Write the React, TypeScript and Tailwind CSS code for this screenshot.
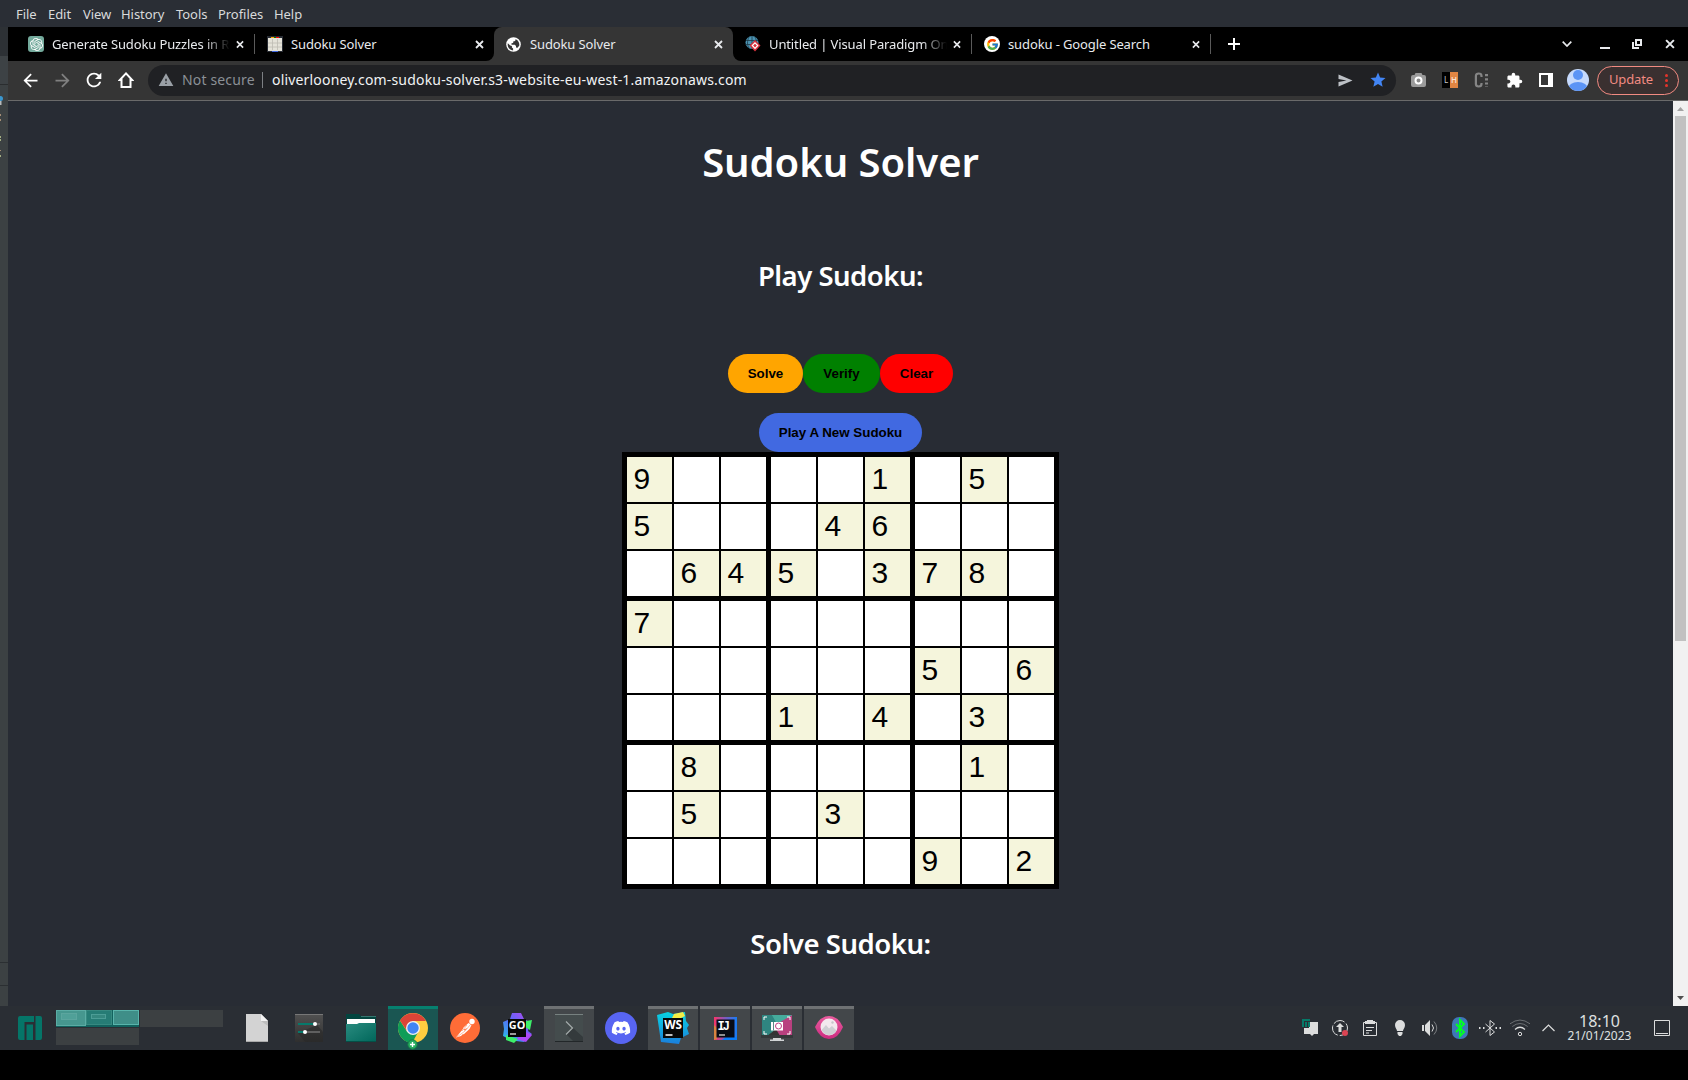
import React from "react";
import {
  MdArrowBack,
  MdArrowForward,
  MdRefresh,
  MdWarning,
  MdStar,
  MdExtension,
} from "react-icons/md";
import { SiOpenai } from "react-icons/si";
import { FcGoogle } from "react-icons/fc";
import { FaDiscord } from "react-icons/fa";

const PUZZLE = [
  "9....1.5.",
  "5...46...",
  ".645.378.",
  "7........",
  "......5.6",
  "...1.4.3.",
  ".8.....1.",
  ".5..3....",
  "......9.2",
];

const MENU = [
  { label: "File", width: "w-[32px]" },
  { label: "Edit", width: "w-[35px]" },
  { label: "View", width: "w-[38px]" },
  { label: "History", width: "w-[55px]" },
  { label: "Tools", width: "w-[42px]" },
  { label: "Profiles", width: "w-[56px]" },
  { label: "Help", width: "w-[40px]" },
];

function MenuBar() {
  return (
    <div className="flex h-[27px] shrink-0 items-center bg-[#2a2e35] pl-4 text-[13px] tracking-[-0.05px] text-[#d9dadb]">
      {MENU.map((m) => (
        <span key={m.label} className={`${m.width} pt-0.5`}>
          {m.label}
        </span>
      ))}
    </div>
  );
}

function Cross({ size = 9, color = "#e8eaed" }: { size?: number; color?: string }) {
  return (
    <svg width={size} height={size} viewBox="0 0 9 9">
      <path d="M1 1l7 7M8 1l-7 7" stroke={color} strokeWidth="1.8" />
    </svg>
  );
}

function SudokuFavicon() {
  return (
    <svg width="16" height="16" viewBox="0 0 16 16">
      <rect width="16" height="16" fill="#282c34" />
      <rect x="4" y="1" width="3" height="1" fill="#ffa500" />
      <rect x="7" y="1" width="2" height="1" fill="#008000" />
      <rect x="9" y="1" width="3" height="1" fill="#ff0000" />
      <rect x="1" y="2" width="14" height="13" fill="#e4e2d8" />
      <path d="M5.500 3v11M10.500 3v11M1 7h14M1 11h14" stroke="#bdbbb2" strokeWidth=".8" />
      <rect x="5" y="15" width="6" height="1" fill="#4169e1" />
    </svg>
  );
}

function GlobeFavicon() {
  return (
    <svg width="15" height="15" viewBox="0 0 15 15">
      <circle cx="7.500" cy="7.500" r="7.300" fill="#fff" />
      <path
        d="M1.800 6.200l2.400 2.300 1.700.4v1.600l1.200 1.100v1.900c-3.500-.3-6-3.500-5.300-7.300zM9.500 2.200c3 1 4.300 4 3.700 6.600l-1.700 2-1.500-.4V9L8.800 7.700H5.500V6.300l1.700-.4V4.500l2-.6z"
        fill="#353535"
      />
    </svg>
  );
}

function ParadigmFavicon() {
  return (
    <svg width="16" height="16" viewBox="0 0 16 16">
      <circle cx="7" cy="6.500" r="6.500" fill="#4c93b2" />
      <path d="M1 4.500h12M.500 8.500h12M7 0v13M4 1c-2 4-2 8 0 11M10 1c2 4 2 8 0 11" stroke="#1b3a49" strokeWidth=".8" fill="none" />
      <path d="M10 4l5.500 5.500L10 15.500 4.500 9.500z" fill="#d9303c" />
      <path d="M10 6.800l2.700 2.700-2.700 2.900-2.700-2.900z" fill="none" stroke="#fff" strokeWidth="1.200" />
    </svg>
  );
}

type TabInfo = {
  title: string;
  icon: React.ReactNode;
  active?: boolean;
  separator?: boolean;
  fade?: boolean;
  corner?: string;
};

const TABS: TabInfo[] = [
  {
    title: "Generate Sudoku Puzzles in R",
    icon: (
      <span className="flex size-4 items-center justify-center rounded-[3px] bg-[#74aa9c]">
        <SiOpenai size={13} color="#ffffff" />
      </span>
    ),
    separator: true,
    fade: true,
  },
  { title: "Sudoku Solver", icon: <SudokuFavicon />, corner: "rounded-br-[8px]" },
  {
    title: "Sudoku Solver",
    icon: <GlobeFavicon />,
    active: true,
  },
  {
    title: "Untitled | Visual Paradigm On",
    icon: <ParadigmFavicon />,
    separator: true,
    fade: true,
    corner: "rounded-bl-[8px]",
  },
  {
    title: "sudoku - Google Search",
    icon: (
      <span className="flex size-4 items-center justify-center rounded-full bg-white">
        <FcGoogle size={13} />
      </span>
    ),
    separator: true,
  },
];

function Tab({ tab }: { tab: TabInfo }) {
  return (
    <div className={tab.active ? "w-[239px] bg-black" : "w-[239px] bg-[#353535]"}>
      <div
        className={`flex h-[34px] items-center pl-[12px] ${
          tab.active ? "rounded-t-[8px] bg-[#353535]" : "bg-black"
        } ${tab.corner ?? ""}`}
      >
        <span className="flex w-[24px] shrink-0 items-center">{tab.icon}</span>
        <span
          className={`w-[184px] shrink-0 text-[13px] leading-5 tracking-[-0.12px] whitespace-nowrap text-[#e8eaed] ${
            tab.fade
              ? "[mask-image:linear-gradient(to_right,black_152px,transparent_178px)]"
              : ""
          }`}
        >
          {tab.title}
        </span>
        <Cross />
        {tab.separator && <span className="ml-[10px] h-5 w-px shrink-0 bg-[#5a5a5a]" />}
      </div>
    </div>
  );
}

function TabStrip() {
  return (
    <div className="flex h-[34px] shrink-0 items-center bg-black">
      <div className="w-2 self-stretch" />
      {TABS.map((t, i) => (
        <Tab key={i} tab={t} />
      ))}
      <svg className="ml-[17px]" width="12" height="12" viewBox="0 0 12 12">
        <path d="M6 0v12M0 6h12" stroke="#fff" strokeWidth="2" />
      </svg>
      <div className="mr-[13px] ml-auto flex items-center">
        <svg width="10" height="6" viewBox="0 0 10 6" className="mr-7">
          <path d="M.7.700l4.300 4.300 4.300-4.300" fill="none" stroke="#e8eaed" strokeWidth="1.700" />
        </svg>
        <span className="mt-2 mr-[22px] h-0.5 w-2.5 bg-[#e8eaed]" />
        <svg width="10" height="10" viewBox="0 0 10 10" className="mr-[23px]">
          <path d="M4 1h5v5H4zM1 3v6h6" fill="none" stroke="#e8eaed" strokeWidth="2" />
        </svg>
        <Cross size={10} />
      </div>
    </div>
  );
}

function Toolbar() {
  return (
    <div className="flex h-10 shrink-0 items-center border-b border-[#6a6a6a] bg-[#353535] pb-px pl-[6px]">
      <span className="flex w-8 justify-center"><MdArrowBack size={21} color="#fff" /></span>
      <span className="flex w-8 justify-center"><MdArrowForward size={21} color="#808080" /></span>
      <span className="flex w-8 justify-center"><MdRefresh size={22} color="#fff" /></span>
      <span className="flex w-8 justify-center">
        <svg width="16" height="16" viewBox="0 0 16 16">
          <path d="M8 1.400L1.800 8H3.500v7h9V8h1.700z" fill="none" stroke="#fff" strokeWidth="2" />
        </svg>
      </span>
      <div className="ml-[6px] flex h-[31px] w-[1248px] items-center rounded-full bg-[#202124] pl-[10px] text-[14px]">
        <MdWarning size={16} color="#9aa0a6" />
        <span className="ml-2 w-[80px] pb-0.5 text-[14px] tracking-[0.15px] text-[#8b9096]">Not secure</span>
        <span className="h-4 w-px bg-[#7d8084]" />
        <span className="ml-[9px] pb-0.5 text-[14px] tracking-[0.18px] text-[#f1f3f4]">
          oliverlooney.com-sudoku-solver.s3-website-eu-west-1.amazonaws.com
        </span>
        <svg className="ml-auto" width="15" height="13" viewBox="0 0 15 13">
          <path d="M.500.500l14 6-14 6V8l8-1.500-8-1.500z" fill="#bdc1c6" />
        </svg>
        <span className="mr-[9px] ml-[16px]"><MdStar size={18} color="#4285f4" /></span>
      </div>
      <div className="flex items-center pl-[15px]">
        <span className="w-[31px]">
          <svg width="15" height="14" viewBox="0 0 15 14">
            <path d="M4.500 0h6l1 2H13a2 2 0 0 1 2 2v8a2 2 0 0 1-2 2H2a2 2 0 0 1-2-2V4a2 2 0 0 1 2-2h1.500z" fill="#9b9b9b" />
            <circle cx="7.500" cy="7.500" r="3" fill="#8a8a8a" stroke="#fff" strokeWidth="2" />
          </svg>
        </span>
        <div className="flex h-4 w-4 text-[8px] leading-4">
          <span className="w-2 bg-black text-center text-[#c8c8c8]">L</span>
          <span className="w-2 bg-[#e08543] text-center font-semibold text-[#f6e2d2]">H</span>
        </div>
        <svg className="ml-[16px]" width="16" height="16" viewBox="0 0 16 16">
          <path d="M7.500 5V4Q7.500 1.500 4.700 1.500T1.900 4v8q0 2.500 2.800 2.500T7.500 12v-1" fill="none" stroke="#858585" strokeWidth="2.200" />
          <path d="M12.500 2v13" fill="none" stroke="#858585" strokeWidth="3" strokeDasharray="2.200 2" />
        </svg>
        <span className="ml-[16px]"><MdExtension size={17} color="#fff" /></span>
        <svg className="ml-[16px]" width="14" height="14" viewBox="0 0 14 14">
          <path d="M0 0h14v14H0zM2 2v10h7V2z" fill="#fff" fillRule="evenodd" />
        </svg>
        <div className="ml-[14px] flex size-[22px] flex-col items-center overflow-hidden rounded-full bg-[#c6dafc]">
          <span className="mt-px size-[10px] shrink-0 rounded-full bg-[#5b94f5]" />
          <span className="mt-[2px] h-[14px] w-[20px] shrink-0 rounded-[50%] bg-[#5b94f5]" />
        </div>
        <div className="ml-2 flex h-[29px] w-[82px] items-center rounded-full border border-[#f28b82] bg-[#3a3030] pl-[11px] text-[13px] tracking-[-0.15px] text-[#f28b82]">
          <span>Update</span>
          <span className="ml-auto flex w-[3px] flex-col gap-0.5">
            <i className="size-[3px] rounded-full bg-[#e5342b]" />
            <i className="size-[3px] rounded-full bg-[#e5342b]" />
            <i className="size-[3px] rounded-full bg-[#e5342b]" />
          </span>
          <span className="w-[10px]" />
        </div>
      </div>
    </div>
  );
}

function PillButton({ color, width, children }: { color: string; width: string; children: string }) {
  return (
    <button
      className={`h-[39px] rounded-[20px] text-center font-['Liberation_Sans',sans-serif] text-[13.333px] font-bold text-black ${color} ${width}`}
    >
      {children}
    </button>
  );
}

function Board() {
  const blocks = [0, 1, 2];
  return (
    <div className="grid w-[437px] grid-cols-3 gap-[5px] bg-black p-[5px] font-['Liberation_Sans',sans-serif] text-[30px] leading-[43px] text-black">
      {blocks.map((br) =>
        blocks.map((bc) => (
          <div key={`${br}${bc}`} className="grid grid-cols-3 gap-[2px]">
            {blocks.map((r) =>
              blocks.map((c) => {
                const v = PUZZLE[br * 3 + r][bc * 3 + c];
                const given = v !== ".";
                return (
                  <div
                    key={`${r}${c}`}
                    className={`h-[45px] w-[45px] pl-[6.5px] ${given ? "bg-[#f5f5dc]" : "bg-white"}`}
                  >
                    {given ? v : ""}
                  </div>
                );
              }),
            )}
          </div>
        )),
      )}
    </div>
  );
}

function Page() {
  return (
    <main className="flex flex-1 flex-col items-center overflow-hidden bg-[#282c34] font-['Noto_Sans',sans-serif] text-white">
      <h1 className="mt-[31px] h-[60px] text-[40px] leading-[60px] font-semibold tracking-[-0.05px] whitespace-nowrap">Sudoku Solver</h1>
      <h2 className="mt-[63px] h-[42px] text-[27.5px] leading-[42px] font-semibold tracking-[-0.5px] whitespace-nowrap">Play Sudoku:</h2>
      <div className="mt-[57px] flex">
        <PillButton color="bg-[#ffa500]" width="w-[75px]">Solve</PillButton>
        <PillButton color="bg-[#008000]" width="w-[77px]">Verify</PillButton>
        <PillButton color="bg-[#ff0000]" width="w-[73px]">Clear</PillButton>
      </div>
      <div className="mt-5 flex">
        <PillButton color="bg-[#4169e1]" width="w-[163px]">Play A New Sudoku</PillButton>
      </div>
      <Board />
      <h2 className="mt-[34px] h-[42px] text-[27.5px] leading-[42px] font-semibold tracking-[-0.45px] whitespace-nowrap">Solve Sudoku:</h2>
    </main>
  );
}

function LeftStrip() {
  return (
    <aside className="flex w-2 shrink-0 flex-col bg-[#3c4143]">
      <svg width="8" height="905" viewBox="0 0 8 905">
        <path d="M0 0h1.500v4H0z" fill="#b5b9bb" />
        <path d="M0 13h1v2H0zM0 18h1v2H0zM0 49h1v1H0z" fill="#a58e76" />
        <path d="M0 35h1v2H0zM0 38h1v2H0zM0 54h1v2H0z" fill="#a3ad83" />
        <path d="M0 861.500h8M0 884.500h8" stroke="#2b2f32" />
      </svg>
    </aside>
  );
}

function Scrollbar() {
  return (
    <div className="flex w-[15px] shrink-0 flex-col items-center bg-[#f1f1f1]">
      <svg width="15" height="15" viewBox="0 0 15 15">
        <path d="M4 10l3.500-4 3.500 4z" fill="#a3a3a3" />
      </svg>
      <div className="h-[525px] w-[11px] bg-[#c1c1c1]" />
      <svg className="mt-auto" width="15" height="15" viewBox="0 0 15 15">
        <path d="M4 5l3.500 4 3.500-4z" fill="#505050" />
      </svg>
    </div>
  );
}

function Pager() {
  return (
    <div className="ml-[14px] grid h-[44px] w-[168px] grid-cols-[83px_83px] content-start gap-x-px gap-y-px pt-1">
      <div className="flex h-[17px] items-start bg-[#12625e]">
        <div className="h-4 w-[30px] border border-[#5aaca4] bg-[#46978f] pt-[2px] pl-1">
          <div className="h-[7px] w-4 border border-[#5ba59e] bg-[#50a098]" />
        </div>
        <div className="h-[15px] w-[26px] border border-[#368980] bg-[#267c75] pt-[3px] pl-1">
          <div className="h-[5px] w-[15px] border border-[#4c9d96] bg-[#35877f]" />
        </div>
        <div className="ml-px h-[15px] w-[26px] border border-[#58b4ab] bg-[#3f8e88]" />
      </div>
      <div className="h-[17px] bg-[#3c4042]" />
      <div className="h-[17px] bg-[#3c4042]" />
    </div>
  );
}

function FileIcon() {
  return (
    <svg width="22" height="28" viewBox="0 0 22 28">
      <path d="M0 0h15l7 7v21H0z" fill="#d3d3d3" />
      <path d="M15 7l7 5V7z" fill="#bdbdbd" />
      <path d="M15 0l7 7h-7z" fill="#f3f3f3" />
      <path d="M0 27.500h22" stroke="#aaa" />
    </svg>
  );
}

function SettingsIcon() {
  return (
    <svg width="28" height="28" viewBox="0 0 28 28">
      <defs>
        <linearGradient id="set" x1="0" y1="0" x2="0" y2="1">
          <stop offset="0" stopColor="#515151" />
          <stop offset="1" stopColor="#2f2f2f" />
        </linearGradient>
      </defs>
      <rect width="28" height="28" fill="url(#set)" />
      <path d="M0 .500h28" stroke="#777" />
      <path d="M3 19l7 9h18V18l-6-7z" fill="#252525" opacity=".5" />
      <path d="M3 10h22M3 18h22" stroke="#606060" strokeWidth="2" />
      <path d="M3 10h16M3 18h6" stroke="#06796b" strokeWidth="2" />
      <circle cx="20" cy="10" r="2" fill="#fff" />
      <circle cx="10" cy="18" r="2" fill="#fff" />
    </svg>
  );
}

function FolderIcon() {
  return (
    <svg width="30" height="28" viewBox="0 0 30 28">
      <defs>
        <linearGradient id="fold" x1="0" y1="0" x2="1" y2="1">
          <stop offset="0" stopColor="#2a8c80" />
          <stop offset="1" stopColor="#00665a" />
        </linearGradient>
      </defs>
      <path d="M0 0h13l2 2h15v12H0z" fill="#03453f" />
      <path d="M14 0h16v2H15z" fill="#2a2e34" />
      <path d="M15 2.500h15" stroke="#36766f" />
      <path d="M1 5h28v8H1z" fill="#fff" />
      <path d="M0 10h11l2-1h17v19H0z" fill="url(#fold)" />
      <path d="M0 27.500h30" stroke="#045047" />
    </svg>
  );
}

function ChromeIcon() {
  return (
    <span className="relative flex">
      <svg width="30" height="30" viewBox="0 0 30 30">
        <circle cx="15" cy="15" r="15" fill="#ffcd40" />
        <path d="M2 7.500A15 15 0 0 0 14 30l6.500-11.500L9 18.500z" fill="#0f9d58" />
        <path d="M2 7.500A15 15 0 0 1 28 8H15l-6 10z" fill="#db4437" />
        <circle cx="15" cy="15" r="7" fill="#f1f1f1" />
        <circle cx="15" cy="15" r="5.700" fill="#4285f4" />
      </svg>
      <svg className="absolute top-[26px] left-[9px]" width="11" height="11" viewBox="0 0 11 11">
        <circle cx="5.500" cy="5.500" r="4.700" fill="#27ae60" stroke="#187646" />
        <path d="M5.500 3v5M3 5.500h5" stroke="#fff" strokeWidth="1.400" />
      </svg>
    </span>
  );
}

function PostmanIcon() {
  return (
    <svg width="30" height="30" viewBox="0 0 30 30">
      <circle cx="15" cy="15" r="15" fill="#ff6c37" />
      <circle cx="22" cy="8.500" r="2.700" fill="#fff" />
      <path d="M18.500 10l3 2-2 4-6 5.500-1-2 5-4.500-5 2 1-2.500z" fill="#fff" />
      <path d="M13 16l2.500 2.500L11 23l-5 1.500z" fill="#fff" />
      <path d="M21 11l-6 7-8 6M17 12l-5 6" stroke="#ff6c37" strokeWidth=".5" fill="none" />
    </svg>
  );
}

function GoIcon() {
  return (
    <svg width="30" height="30" viewBox="0 0 30 30">
      <defs>
        <linearGradient id="go" x1="0" y1="1" x2="1" y2="0">
          <stop offset="0" stopColor="#24c8e8" />
          <stop offset=".5" stopColor="#5868f8" />
          <stop offset="1" stopColor="#c443f0" />
        </linearGradient>
      </defs>
      <path d="M10 0h9l3 6 6 3-2 9 4 3-8 8-8-1-7-2-6-3 1-7-1-7 7-3z" fill="url(#go)" />
      <path d="M30 7l-2 10-5-3 1-6zM4 22l12 4-4 4-8-3z" fill="#3df06a" />
      <path d="M22 18l8 4-6 7-9-3z" fill="#ad48f6" />
      <rect x="6" y="6" width="18" height="18" fill="#080808" />
      <text x="6.800" y="16" fontSize="11" fontWeight="700" fill="#fff" fontFamily="Open Sans, sans-serif" textLength="16.500" lengthAdjust="spacingAndGlyphs">GO</text>
      <path d="M8 21h6" stroke="#ccc" strokeWidth="1.500" />
    </svg>
  );
}

function TerminalIcon() {
  return (
    <svg width="28" height="28" viewBox="0 0 28 28">
      <rect width="28" height="28" fill="#444c4d" />
      <path d="M11 20l7-6 10 9v5h-9z" fill="#343a3c" />
      <path d="M0 .500h28" stroke="#778180" />
      <path d="M0 27.500h28" stroke="#222729" />
      <path d="M11 7.500l6.500 6.500-6.500 6.500" fill="none" stroke="#a3abaa" strokeWidth="1.200" />
    </svg>
  );
}

function WsIcon() {
  return (
    <svg width="32" height="32" viewBox="0 0 32 32">
      <defs>
        <linearGradient id="ws" x1="0" y1="0" x2="0" y2="1">
          <stop offset="0" stopColor="#08d3e2" />
          <stop offset="1" stopColor="#1b7fdc" />
        </linearGradient>
      </defs>
      <path d="M0 3l11-3 5 2 12-2 1 9 3 4-2 3 2 6-8 4-2 6-18-2z" fill="url(#ws)" />
      <path d="M17 2l9-2 2 4-8 4h-6z" fill="#f5ec45" />
      <rect x="6" y="6" width="20" height="20" fill="#080808" />
      <text x="7.200" y="17" fontSize="11.500" fontWeight="700" fill="#fff" fontFamily="Open Sans, sans-serif" textLength="17.800" lengthAdjust="spacingAndGlyphs">WS</text>
      <path d="M8.500 23h7" stroke="#fff" strokeWidth="1.500" />
    </svg>
  );
}

function IjIcon() {
  return (
    <svg width="23" height="23" viewBox="0 0 23 23">
      <defs>
        <linearGradient id="ij" x1="0" y1="0" x2="1" y2="0">
          <stop offset="0" stopColor="#fc3468" />
          <stop offset=".5" stopColor="#7b5bc0" />
          <stop offset="1" stopColor="#167df5" />
        </linearGradient>
      </defs>
      <rect width="23" height="23" fill="url(#ij)" />
      <path d="M0 8l3 3v11l-3 1z" fill="#d98440" />
      <path d="M12 20h11v3H8z" fill="#087cfa" />
      <rect x="2.500" y="2.500" width="18" height="18" fill="#080c16" />
      <text x="3.500" y="12.800" fontSize="12" fontWeight="700" fill="#fff" fontFamily="Liberation Mono, monospace" textLength="12.500">IJ</text>
      <path d="M5 18h6" stroke="#bbb" strokeWidth="1.500" />
    </svg>
  );
}

function ScreenshotIcon() {
  return (
    <svg width="32" height="27" viewBox="0 0 32 27">
      <rect x="1" width="30" height="21" fill="#3fa295" />
      <path d="M31 0v21H14L11 8z" fill="#b8407f" />
      <path d="M1 0h10l5 8-8 13H1z" fill="#2f8580" />
      <path d="M11 0h20l-15 9z" fill="#45ab9c" />
      <path d="M6 21l9-7 4 7z" fill="#333" />
      <path d="M3 5V2h3M26 2h3v3M3 16v3h3M26 19h3v-3" fill="none" stroke="#fff" />
      <rect x="10" y="7" width="12" height="8.500" fill="#fff" />
      <circle cx="17.500" cy="11" r="3" fill="#fff" stroke="#bd3f82" />
      <path d="M12.500 7v8.500" stroke="#5b8b87" />
      <path d="M0 20h32v3H0z" fill="#34383a" />
      <path d="M12 23h8v1.500h3V26H9v-1.500h3z" fill="#d1d4d5" />
    </svg>
  );
}

function EyeIcon() {
  return (
    <svg width="28" height="24" viewBox="0 0 28 24">
      <defs>
        <linearGradient id="eye" x1="0" y1="0" x2="0" y2="1">
          <stop offset="0" stopColor="#ea5c9e" />
          <stop offset="1" stopColor="#cc2b80" />
        </linearGradient>
      </defs>
      <path d="M0 11Q5 0 14 0t14 11q-5 12-14 12T0 11z" fill="url(#eye)" />
      <circle cx="14" cy="11" r="8.500" fill="#f3e9ee" />
      <path d="M6.500 14l4.500-5 3 3.500 3-2.500 4.500 4.500q-2.500 4.500-7.500 4.500t-7.500-5z" fill="#cfcfd3" />
      <circle cx="17.500" cy="6.500" r="1.200" fill="#c6c6ca" />
    </svg>
  );
}

const TASKS: { icon: React.ReactNode; style: string }[] = [
  { icon: <FileIcon />, style: "border-transparent" },
  { icon: <SettingsIcon />, style: "border-transparent" },
  { icon: <FolderIcon />, style: "border-transparent" },
  { icon: <ChromeIcon />, style: "border-[#06806f] bg-[#1a5652]" },
  { icon: <PostmanIcon />, style: "border-transparent" },
  { icon: <GoIcon />, style: "border-transparent" },
  { icon: <TerminalIcon />, style: "border-[#6e7173] bg-[#43474a]" },
  {
    icon: (
      <span className="flex size-8 items-center justify-center rounded-full bg-[#5865f2]">
        <FaDiscord size={20} color="#fff" />
      </span>
    ),
    style: "border-transparent",
  },
  { icon: <WsIcon />, style: "border-[#6e7173] bg-[#43474a]" },
  { icon: <IjIcon />, style: "border-[#6e7173] bg-[#43474a]" },
  { icon: <ScreenshotIcon />, style: "border-[#6e7173] bg-[#43474a]" },
  { icon: <EyeIcon />, style: "border-[#6e7173] bg-[#43474a]" },
];

const TRAY_ICONS: React.ReactNode[] = [
  <svg width="18" height="18" viewBox="0 0 18 18">
    <path d="M8 3h9v12h-4l-2 2-2-2H3V9h5z" fill="#dcdddd" />
    <path d="M1 0h8v2H3v6H1zM4 3h2v5H4zM7 3h2v5H7z" fill="#057968" />
  </svg>,
  <svg width="18" height="18" viewBox="0 0 18 18">
    <circle cx="9" cy="9" r="7.500" fill="none" stroke="#dcdddd" strokeDasharray="12 2" />
    <path d="M9 4l4 4h-2.500v5h-3V8H5z" fill="#dcdddd" />
    <circle cx="14" cy="14" r="3" fill="#da4453" />
  </svg>,
  <svg width="16" height="18" viewBox="0 0 16 18">
    <path d="M1.500 3.500h13v13h-13z" fill="none" stroke="#dcdddd" />
    <path d="M3 2h2V1h6v1h2v3H3z" fill="#dcdddd" />
    <path d="M4 8.500h8M4 11.500h6M4 14h3" stroke="#dcdddd" />
  </svg>,
  <svg width="12" height="18" viewBox="0 0 12 18">
    <path d="M6 1a5 5 0 0 1 5 5c0 3-2 4-2 6H3c0-2-2-3-2-6a5 5 0 0 1 5-5zM3.500 13h5v2l-1.500 2H5l-1.500-2z" fill="#dcdddd" />
  </svg>,
  <svg width="18" height="18" viewBox="0 0 18 18">
    <path d="M1 6h2v6H1zM4 6l5-5v16l-5-5z" fill="#dcdddd" />
    <path d="M11 5.500q3 3.500 0 7" fill="none" stroke="#dcdddd" />
    <path d="M13 2.500q5.500 6.500 0 13" fill="none" stroke="#7d8083" />
  </svg>,
  <svg width="16" height="22" viewBox="0 0 16 22">
    <rect width="16" height="22" rx="7" fill="#3e77b6" />
    <path d="M4 7l8 8-4 4V3l4 4-8 8" fill="none" stroke="#0f2" strokeWidth="2" />
  </svg>,
  <svg width="22" height="18" viewBox="0 0 22 18">
    <path d="M6.500 5l9 8-4.500 3.500V1.500L15.500 5l-9 8" fill="none" stroke="#dcdddd" />
    <path d="M0 8h1.500v2H0zM4 8h1.500v2H4zM16.500 8H18v2h-1.500zM20.500 8H22v2h-1.500z" fill="#dcdddd" />
  </svg>,
  <svg width="22" height="18" viewBox="0 0 22 18">
    <circle cx="11" cy="15" r="1.700" fill="none" stroke="#dcdddd" />
    <path d="M6 10.500q5-4.500 10 0" fill="none" stroke="#dcdddd" strokeWidth="1.200" />
    <path d="M3.300 7.500q7.700-6 15.400 0M1 4.800q10-7.500 20 0" fill="none" stroke="#6b6f72" />
  </svg>,
];

function Taskbar() {
  return (
    <div className="flex h-11 shrink-0 items-center bg-[#2a2e34]">
      <svg className="ml-[18px]" width="24" height="24" viewBox="0 0 24 24">
        <path d="M2 0h14v6H6.500v18H2a2 2 0 0 1-2-2V2a2 2 0 0 1 2-2zM8.500 8.500H15V24H8.500zM17.500 0H22a2 2 0 0 1 2 2v20a2 2 0 0 1-2 2h-4.500z" fill="#057568" />
      </svg>
      <Pager />
      <div className="ml-2 flex gap-0.5">
        {TASKS.map((t, i) => (
          <div key={i} className={`flex h-11 w-[50px] items-center justify-center border-t-[3px] pb-[3px] ${t.style}`}>
            {t.icon}
          </div>
        ))}
      </div>
      <div className="ml-auto flex items-center">
        {TRAY_ICONS.map((icon, i) => (
          <span key={i} className="flex w-[30px] justify-center">
            {icon}
          </span>
        ))}
        <svg className="ml-[7px]" width="13" height="8" viewBox="0 0 13 8">
          <path d="M.500 7l6-6 6 6" fill="none" stroke="#dcdddd" strokeWidth="1.200" />
        </svg>
        <div className="flex w-[89px] flex-col items-center pb-px text-[#dfe0e0]">
          <span className="text-[16px] leading-4">18:10</span>
          <span className="text-[12px] leading-[13px]">21/01/2023</span>
        </div>
        <svg className="mr-[18px] ml-[10px]" width="16" height="16" viewBox="0 0 16 16">
          <path d="M.500.500h15v15H.500zM2 13.500h12" fill="none" stroke="#dcdddd" />
        </svg>
      </div>
    </div>
  );
}

export default function App() {
  return (
    <div className="flex h-[1080px] w-[1688px] flex-col overflow-hidden bg-black font-['Noto_Sans',sans-serif]">
      <MenuBar />
      <div className="flex h-[74px] shrink-0">
        <div className="flex w-2 shrink-0 flex-col bg-[#3c4143]">
          <div className="h-[29px] bg-[#2d3135]" />
          <div className="h-[28px] bg-[#3d4245]" />
          <div className="h-px bg-[#2a2d2f]" />
          <div className="mt-[11px] h-[5px] w-[3px] rounded-r-full bg-[#3a97cf]" />
        </div>
        <div className="flex flex-1 flex-col">
          <TabStrip />
          <Toolbar />
        </div>
      </div>
      <div className="flex h-[905px] shrink-0">
        <LeftStrip />
        <Page />
        <Scrollbar />
      </div>
      <Taskbar />
    </div>
  );
}
